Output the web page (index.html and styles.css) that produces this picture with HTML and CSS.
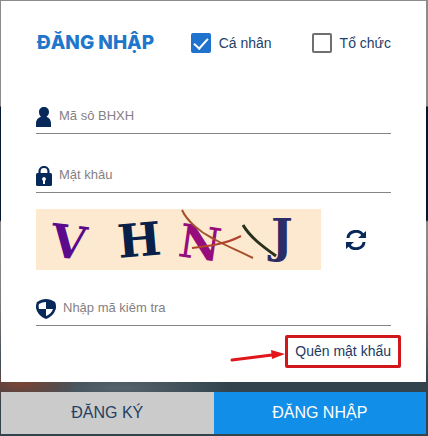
FILE: index.html
```html
<!DOCTYPE html>
<html lang="vi">
<head>
    <meta charset="UTF-8">
    <meta name="viewport" content="width=device-width, initial-scale=1.0">
    <title>Đăng nhập</title>
    <link rel="stylesheet" href="styles.css">
</head>
<body>
    <form class="login" id="loginForm">
        <div class="card">
            <div class="header">
                <h1>ĐĂNG NHẬP</h1>
                <label class="check"><input type="checkbox" name="canhan" checked><span>Cá nhân</span></label>
                <label class="check"><input type="checkbox" name="tochuc"><span>Tổ chức</span></label>
            </div>

            <div class="field">
                <svg width="16" height="20" viewBox="0 0 16 20" aria-hidden="true">
                    <path fill="#06295a" d="M8 0C5 0 3 2 3 5c0 2 .7 3.700 2 4.700C2 10.500 0 13 0 16v4h15v-4c0-3-2-5.500-4.500-6.300C12 8.700 13 7 13 5c0-3-2-5-5-5z"/>
                </svg>
                <input type="text" name="username" placeholder="Mã sô BHXH" aria-label="Mã sô BHXH">
            </div>

            <div class="field">
                <svg width="16" height="20" viewBox="0 0 16 20" aria-hidden="true">
                    <path fill="none" stroke="#06295a" stroke-width="2.200" d="M3.500 9V5.500a4.500 4.500 0 0 1 9 0V9"/>
                    <rect y="7" width="16" height="13" rx="1.500" fill="#06295a"/>
                    <path fill="#fff" d="M8 11a2 2 0 0 0-1 3.700V18h2v-3.300A2 2 0 0 0 8 11z"/>
                </svg>
                <input type="password" name="password" placeholder="Mật khâu" aria-label="Mật khâu">
            </div>

            <div class="captcha">
                <svg class="captcha-image" viewBox="0 0 285 61" role="img" aria-label="Captcha">
                    <g class="captcha-text">
                        <text fill="#5b0a8c" transform="translate(13 47) rotate(7)">V</text>
                        <text fill="#071f49" transform="translate(83 49) rotate(-5)">H</text>
                        <text fill="#960c7c" transform="translate(141 47) rotate(8)">N</text>
                        <text fill="#2c2d66" transform="translate(235 43)">J</text>
                    </g>
                    <g fill="none" stroke-width="2">
                        <path stroke="#a4512a" d="M146 1c5 11 18 22 30 28 14 8 27 13 41 20"/>
                        <path stroke="#b0432c" d="M156 39c17-2 34-4 49-12"/>
                        <path stroke="#28311b" stroke-width="3" d="M207 16c7 12 19 21 33 31"/>
                    </g>
                </svg>
                <button type="button" class="refresh" aria-label="Đổi mã">
                    <svg width="20" height="20" viewBox="0 0 20 20" aria-hidden="true">
                        <g fill="none" stroke="#06295a" stroke-width="3">
                            <path d="M2 8a8 7 0 0 1 15-3"/>
                            <path d="M18 12a8 7 0 0 1-15 3"/>
                        </g>
                        <path fill="#06295a" d="M20 1v7h-8zM0 19v-7h8z"/>
                    </svg>
                </button>
            </div>

            <div class="field">
                <svg width="20" height="20" viewBox="0 0 20 20" aria-hidden="true">
                    <path fill="#06295a" d="M10 0c3 0 6 1 9 3 1 2 1 4 1 6-1 5-5 9-10 11C5 18 1 14 0 9c0-2 0-4 1-6 3-2 6-3 9-3z"/>
                    <path fill="#fff" d="M10 3v7H3c-.5-2-.5-3.500 0-5 2-1.300 4.500-2 7-2zM10 10h7c-1.200 3.500-4 6-7 7z"/>
                </svg>
                <input type="text" name="captcha" placeholder="Nhập mã kiêm tra" aria-label="Nhập mã kiêm tra">
            </div>

            <div class="forgot">
                <svg width="56" height="24" viewBox="0 0 56 24" aria-hidden="true">
                    <path stroke="#e0161b" stroke-width="3" stroke-linecap="round" d="M3 20l40-5"/>
                    <path fill="#e0161b" d="M42 10l14 4-13 5z"/>
                </svg>
                <a href="#">Quên mật khẩu</a>
            </div>
        </div>

        <div class="actions">
            <button type="button" class="register">ĐĂNG KÝ</button>
            <button type="submit" class="submit">ĐĂNG NHẬP</button>
        </div>
    </form>
</body>
</html>
```

FILE: styles.css
```css
* {
    box-sizing: border-box;
}
body {
    margin: 0;
    font-family: "Liberation Sans", Arial, sans-serif;
    background:
        radial-gradient(ellipse 60px 20px at 20px 384px, #7c4535, transparent),
        radial-gradient(ellipse 110px 20px at 120px 388px, #56646d, transparent),
        linear-gradient(#8d8b8c 0, #8d8b8c 106px, #06182e 107px, #06182e 220px, #8a8a8c 222px, #807c7c 300px, #33434d 380px, #33434d 100%);
}
.login {
    padding: 1px 2px 2px 1px;
}
.card {
    padding: 32px 35px 14px;
    background-color: white;
}
.header {
    display: flex;
    align-items: center;
    height: 20px;
    margin-bottom: 48px;
}
h1 {
    flex: 1;
    margin: 0 0 0 1px;
    font-family: Inter, sans-serif;
    font-size: 19px;
    font-weight: 800;
    line-height: 20px;
    white-space: nowrap;
    color: #1f76cb;
}
.check {
    display: flex;
    align-items: center;
    gap: 8px;
    font-size: 14px;
    color: #234168;
}
.check + .check {
    margin-left: 40px;
}
.check input {
    appearance: none;
    width: 20px;
    height: 20px;
    margin: 0;
    border: 2px solid #6f6f6f;
    border-radius: 2px;
}
.check input:checked {
    display: grid;
    place-items: center;
    border-color: #1f73cd;
    background-color: #1f73cd;
}
.check input:checked::before {
    content: "";
    width: 6px;
    height: 12px;
    margin-bottom: 4px;
    border: solid white;
    border-width: 0 2px 2px 0;
    transform: rotate(42deg);
}
.field {
    display: flex;
    align-items: center;
    gap: 7px;
    height: 33px;
    border-bottom: 1px solid #858585;
}
.field + .field {
    margin-top: 26px;
}
.field input {
    flex: 1;
    min-width: 0;
    height: 24px;
    padding: 0 0 3px;
    border: none;
    outline: none;
    background: none;
    font: 13px "Liberation Sans", Arial, sans-serif;
}
.field input::placeholder {
    color: #858083;
}
.captcha {
    display: flex;
    align-items: center;
    gap: 25px;
    margin: 16px 0 23px;
}
.captcha-image {
    flex: 0 1 285px;
    min-width: 0;
    background-color: #fde9cf;
}
.captcha-text {
    font-family: "DejaVu Serif", serif;
    font-size: 46px;
    font-weight: bold;
}
.refresh {
    display: flex;
    padding: 0;
    border: none;
    background: none;
    cursor: pointer;
}
.forgot {
    display: flex;
    justify-content: flex-end;
    align-items: center;
    margin: 9px -10px 0 0;
}
.forgot a {
    padding: 6px 7px;
    border: 3px solid #cf171c;
    border-radius: 2px;
    font-size: 14px;
    line-height: 15px;
    color: #1b3963;
    text-decoration: none;
}
.actions {
    display: flex;
    margin-top: 10px;
}
.actions button {
    flex: 1;
    height: 42px;
    padding: 0;
    border: none;
    font: 16px "Liberation Sans", Arial, sans-serif;
    cursor: pointer;
}
.register {
    background-color: #cbcbcb;
    color: #233f63;
}
.submit {
    background-color: #118ee8;
    color: white;
}
```
